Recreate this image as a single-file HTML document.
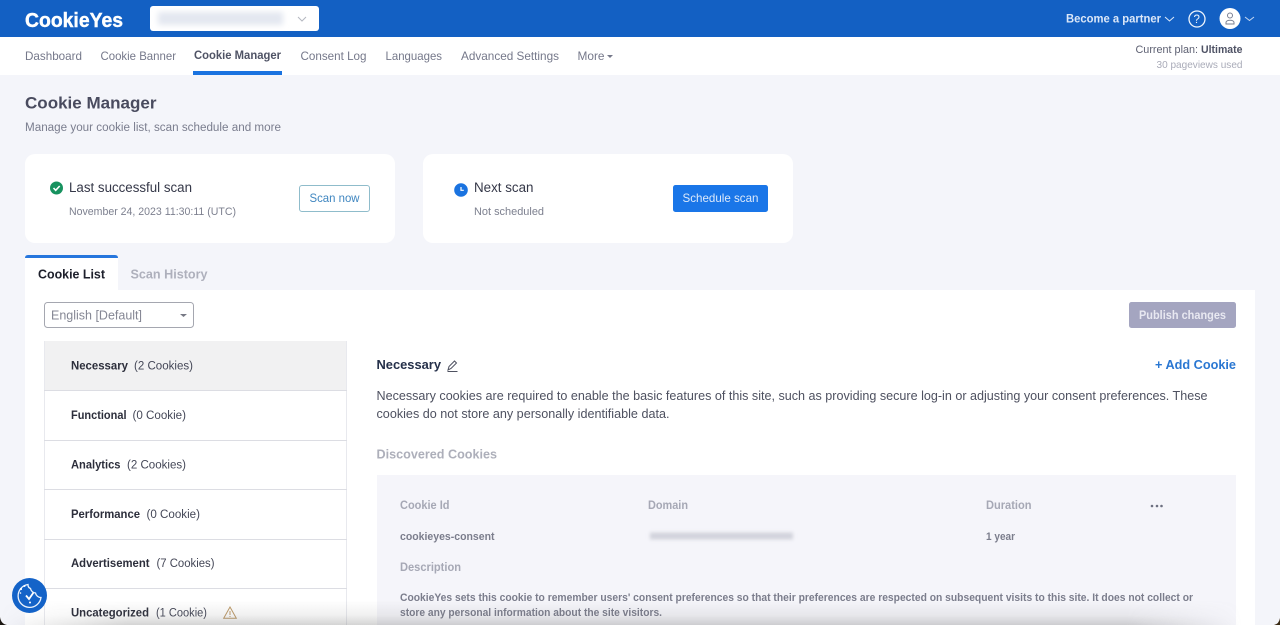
<!DOCTYPE html>
<html lang="en"><head><meta charset="utf-8"><title>Cookie Manager</title>
<style>
html,body{margin:0;padding:0;width:1280px;height:625px;overflow:hidden;background:#f4f5fa}
svg{display:block;overflow:hidden}
text{font-family:"Liberation Sans",sans-serif;font-size:12px;fill:#6b6e80}
.b{font-weight:700}
</style></head><body>
<svg width="1280" height="625" viewBox="0 0 1280 625" xmlns="http://www.w3.org/2000/svg">
<defs>
<filter id="bl3" x="-20%" y="-80%" width="140%" height="260%"><feGaussianBlur stdDeviation="3"/></filter>
<filter id="bl1" x="-20%" y="-80%" width="140%" height="260%"><feGaussianBlur stdDeviation="1.800"/></filter>
<filter id="soft" x="-5%" y="-20%" width="110%" height="140%"><feGaussianBlur stdDeviation=".35"/></filter>
<linearGradient id="vs" x1="0" y1="0" x2="0" y2="1"><stop offset="0" stop-color="#707070" stop-opacity="0"/><stop offset=".6" stop-color="#707070" stop-opacity=".1"/><stop offset="1" stop-color="#707070" stop-opacity=".3"/></linearGradient>
<linearGradient id="hs" x1="0" y1="0" x2="1" y2="0"><stop offset="0" stop-color="#000"/><stop offset=".1" stop-color="#fff"/><stop offset=".88" stop-color="#fff"/><stop offset=".97" stop-color="#000"/></linearGradient>
<mask id="hm" maskUnits="userSpaceOnUse" x="0" y="600" width="1280" height="25"><rect x="0" y="600" width="1280" height="25" fill="url(#hs)"/></mask>
</defs>
<rect width="1280" height="625" fill="#f4f5fa"/>
<!-- header -->
<rect width="1280" height="37" fill="#1360c3"/>
<text x="25" y="27" class="b" style="font-size:20px;fill:#fff;stroke:#fff;stroke-width:.4" textLength="98" lengthAdjust="spacingAndGlyphs">CookieYes</text>
<rect x="150" y="6" width="169" height="25" rx="3" fill="#fff"/>
<rect x="158" y="12" width="125" height="13" fill="#e3e7f0" filter="url(#bl3)"/>
<path d="M298 17l4 4 4-4" fill="none" stroke="#b4b7c0" stroke-width="1"/>
<text x="1066" y="22.500" class="b" style="font-size:12px;fill:#dbe7f8" textLength="95" lengthAdjust="spacingAndGlyphs">Become a partner</text>
<path d="M1165 17l4.500 4 4.500-4" fill="none" stroke="#dfeafa" stroke-width="1"/>
<circle cx="1197" cy="19" r="8" fill="none" stroke="#eef4fc" stroke-width="1.300"/>
<text x="1193.500" y="23" style="font-size:11.500px;fill:#eef4fc">?</text>
<circle cx="1230" cy="18.500" r="10.500" fill="#fff"/>
<circle cx="1230" cy="15.500" r="2.500" fill="none" stroke="#7a7f92"/>
<path d="M1226 24v-1.500c0-3 8-3 8 0v1.500z" fill="none" stroke="#7a7f92"/>
<path d="M1245 17l4.500 3.500 4.500-3.500" fill="none" stroke="#c5d7f2" stroke-width="1"/>
<!-- nav -->
<rect y="37" width="1280" height="38" fill="#fff"/>
<rect x="193" y="71" width="89" height="4" fill="#1a73e0"/>
<!-- cards -->
<rect x="25" y="154" width="370" height="89" rx="10" fill="#fff"/>
<rect x="423" y="154" width="370" height="89" rx="10" fill="#fff"/>
<g filter="url(#soft)">
<text x="25" y="60" style="fill:#75788a;font-size:12px" textLength="57" lengthAdjust="spacingAndGlyphs">Dashboard</text>
<text x="100.500" y="60" style="fill:#75788a;font-size:12px" textLength="75.500" lengthAdjust="spacingAndGlyphs">Cookie Banner</text>
<text x="194" y="59" class="b" style="fill:#505365;font-size:12px" textLength="87" lengthAdjust="spacingAndGlyphs">Cookie Manager</text>
<text x="300.500" y="60" style="fill:#75788a;font-size:12px" textLength="66" lengthAdjust="spacingAndGlyphs">Consent Log</text>
<text x="385.500" y="60" style="fill:#75788a;font-size:12px" textLength="56.500" lengthAdjust="spacingAndGlyphs">Languages</text>
<text x="461" y="60" style="fill:#75788a;font-size:12px" textLength="98" lengthAdjust="spacingAndGlyphs">Advanced Settings</text>
<text x="577.500" y="60" style="fill:#75788a;font-size:12px" textLength="27" lengthAdjust="spacingAndGlyphs">More</text>
<text x="1135.500" y="53" style="font-size:11px;fill:#5d6072" textLength="62.500" lengthAdjust="spacingAndGlyphs">Current plan:</text>
<text x="1201" y="53" class="b" style="font-size:11px;fill:#505365" textLength="41.500" lengthAdjust="spacingAndGlyphs">Ultimate</text>
<text x="1156.500" y="68" style="font-size:10.500px;fill:#a9abb8" textLength="86" lengthAdjust="spacingAndGlyphs">30 pageviews used</text>
<!-- heading -->
<text x="25" y="108.500" class="b" style="font-size:16.500px;fill:#4a4c5e" textLength="131.500" lengthAdjust="spacingAndGlyphs">Cookie Manager</text>
<text x="25" y="131" style="font-size:11.500px;fill:#7a7d8e" textLength="256" lengthAdjust="spacingAndGlyphs">Manage your cookie list, scan schedule and more</text>
<text x="69" y="192" style="font-size:13.500px;fill:#353848" textLength="123" lengthAdjust="spacingAndGlyphs">Last successful scan</text>
<text x="69" y="215" style="font-size:11px;fill:#7d808f" textLength="167" lengthAdjust="spacingAndGlyphs">November 24, 2023 11:30:11 (UTC)</text>
<text x="474" y="192" style="font-size:13.500px;fill:#353848" textLength="59.500" lengthAdjust="spacingAndGlyphs">Next scan</text>
<text x="474" y="215" style="font-size:11px;fill:#7d808f" textLength="70" lengthAdjust="spacingAndGlyphs">Not scheduled</text>
</g>
<path d="M607 55h6l-3 3z" fill="#75788a"/>
<circle cx="56.500" cy="188" r="6.500" fill="#17925f"/>
<path d="M53.500 188l2.200 2.300 4-4.300" fill="none" stroke="#fff" stroke-width="1.600"/>
<rect x="299.500" y="185.500" width="70" height="26" rx="2.500" fill="#fff" stroke="#8fbccb"/>
<text x="309.500" y="202" style="font-size:12px;fill:#3f86c0" textLength="50" lengthAdjust="spacingAndGlyphs">Scan now</text>
<circle cx="461" cy="190" r="6.800" fill="#1a73e0"/>
<path d="M461 187v3.300h2.800" fill="none" stroke="#fff" stroke-width="1.200"/>
<rect x="673" y="185" width="95" height="27" rx="2.500" fill="#1a76e8"/>
<text x="682.500" y="202" style="font-size:12px;fill:#dce9fb" textLength="76" lengthAdjust="spacingAndGlyphs">Schedule scan</text>
<!-- tabs -->
<rect x="25" y="290" width="1230" height="335" fill="#fff"/>
<path d="M25 290v-32q0-3 3-3h87q3 0 3 3v32z" fill="#fff"/>
<path d="M25 258q0-3 3-3h87q3 0 3 3z" fill="#2676dd"/>
<text x="38" y="278.500" class="b" style="font-size:13px;fill:#1d1f2b" textLength="67" lengthAdjust="spacingAndGlyphs">Cookie List</text>
<text x="130.500" y="278.500" class="b" style="font-size:13px;fill:#aeb0bc" textLength="77" lengthAdjust="spacingAndGlyphs">Scan History</text>
<!-- select -->
<rect x="44.500" y="302.500" width="149" height="25" rx="3" fill="#fff" stroke="#a5a7b0"/>
<text x="51" y="319.500" style="font-size:12.500px;fill:#858794" textLength="91" lengthAdjust="spacingAndGlyphs">English [Default]</text>
<path d="M180 314h7l-3.500 3z" fill="#777985"/>
<rect x="1129" y="302" width="107" height="26" rx="2.500" fill="#a4a5c0"/>
<text x="1139" y="319" class="b" style="font-size:12px;fill:#e8e8f1" textLength="87" lengthAdjust="spacingAndGlyphs">Publish changes</text>
<!-- left list -->
<rect x="44" y="341" width="303" height="49.500" fill="#f1f1f2"/>
<path d="M44.500 341v284M346.500 341v284" stroke="#e8e9ee" fill="none"/>
<path d="M44 390.500h303M44 440.500h303M44 489.500h303M44 539.500h303M44 588.500h303" stroke="#dcdde3" fill="none"/>
<text x="71" y="369.500" class="b" style="font-size:11.500px;fill:#2c2e3b" textLength="57" lengthAdjust="spacingAndGlyphs">Necessary</text>
<text x="134" y="369.500" style="font-size:11.500px;fill:#444757" textLength="59" lengthAdjust="spacingAndGlyphs">(2 Cookies)</text>
<text x="71" y="419" class="b" style="font-size:11.500px;fill:#2c2e3b" textLength="55.500" lengthAdjust="spacingAndGlyphs">Functional</text>
<text x="132.500" y="419" style="font-size:11.500px;fill:#444757" textLength="53.500" lengthAdjust="spacingAndGlyphs">(0 Cookie)</text>
<text x="71" y="468.500" class="b" style="font-size:11.500px;fill:#2c2e3b" textLength="49.500" lengthAdjust="spacingAndGlyphs">Analytics</text>
<text x="127" y="468.500" style="font-size:11.500px;fill:#444757" textLength="59" lengthAdjust="spacingAndGlyphs">(2 Cookies)</text>
<text x="71" y="518" class="b" style="font-size:11.500px;fill:#2c2e3b" textLength="69" lengthAdjust="spacingAndGlyphs">Performance</text>
<text x="146.500" y="518" style="font-size:11.500px;fill:#444757" textLength="53.500" lengthAdjust="spacingAndGlyphs">(0 Cookie)</text>
<text x="71" y="567" class="b" style="font-size:11.500px;fill:#2c2e3b" textLength="78.500" lengthAdjust="spacingAndGlyphs">Advertisement</text>
<text x="156.500" y="567" style="font-size:11.500px;fill:#444757" textLength="58" lengthAdjust="spacingAndGlyphs">(7 Cookies)</text>
<text x="71" y="616.500" class="b" style="font-size:11.500px;fill:#2c2e3b" textLength="78" lengthAdjust="spacingAndGlyphs">Uncategorized</text>
<text x="156" y="616.500" style="font-size:11.500px;fill:#444757" textLength="51" lengthAdjust="spacingAndGlyphs">(1 Cookie)</text>
<path d="M230 607l6.300 11.300h-12.600z" fill="none" stroke="#bd9a68" stroke-width="1"/>
<path d="M230 611v4M230 616v1" stroke="#bd9a68" stroke-width="1"/>
<!-- right -->
<text x="376.500" y="369" class="b" style="font-size:13px;fill:#25304a" textLength="64.500" lengthAdjust="spacingAndGlyphs">Necessary</text>
<path d="M448 370l1-3.500 5.500-5.500 2 2-5.500 5.500zM447.500 371.500h10" fill="none" stroke="#4e5160" stroke-width="1"/>
<text x="1155" y="369" class="b" style="font-size:13px;fill:#2a77d2" textLength="81" lengthAdjust="spacingAndGlyphs">+ Add Cookie</text>
<text x="376.500" y="400" style="font-size:12.500px;fill:#4e5160" textLength="831" lengthAdjust="spacingAndGlyphs">Necessary cookies are required to enable the basic features of this site, such as providing secure log-in or adjusting your consent preferences. These</text>
<text x="376.500" y="418" style="font-size:12.500px;fill:#4e5160" textLength="293" lengthAdjust="spacingAndGlyphs">cookies do not store any personally identifiable data.</text>
<text x="376.500" y="458.500" class="b" style="font-size:12.500px;fill:#adafba" textLength="120.500" lengthAdjust="spacingAndGlyphs">Discovered Cookies</text>
<!-- table -->
<rect x="377" y="475" width="859" height="150" fill="#f5f5fa"/>
<text x="400" y="509" class="b" style="font-size:11.500px;fill:#a6a8b5" textLength="49.500" lengthAdjust="spacingAndGlyphs">Cookie Id</text>
<text x="648" y="509" class="b" style="font-size:11.500px;fill:#a6a8b5" textLength="40" lengthAdjust="spacingAndGlyphs">Domain</text>
<text x="986" y="509" class="b" style="font-size:11.500px;fill:#a6a8b5" textLength="45.500" lengthAdjust="spacingAndGlyphs">Duration</text>
<circle cx="1152" cy="506" r="1.300" fill="#6d7080"/><circle cx="1157" cy="506" r="1.300" fill="#6d7080"/><circle cx="1161.500" cy="506" r="1.300" fill="#6d7080"/>
<text x="400" y="540" class="b" style="font-size:11px;fill:#7b7d8c" textLength="94.500" lengthAdjust="spacingAndGlyphs">cookieyes-consent</text>
<rect x="650" y="532.500" width="143" height="7" fill="#d2d3dc" filter="url(#bl1)"/>
<text x="986" y="540" class="b" style="font-size:11px;fill:#7b7d8c" textLength="29" lengthAdjust="spacingAndGlyphs">1 year</text>
<text x="400" y="571" class="b" style="font-size:11.500px;fill:#a6a8b5" textLength="61" lengthAdjust="spacingAndGlyphs">Description</text>
<text x="400" y="601" class="b" style="font-size:11px;fill:#7b7d8c" textLength="793" lengthAdjust="spacingAndGlyphs">CookieYes sets this cookie to remember users' consent preferences so that their preferences are respected on subsequent visits to this site. It does not collect or</text>
<text x="400" y="616" class="b" style="font-size:11px;fill:#7b7d8c" textLength="262" lengthAdjust="spacingAndGlyphs">store any personal information about the site visitors.</text>
<!-- bottom shade -->
<rect x="0" y="600" width="1280" height="25" fill="url(#vs)" mask="url(#hm)"/>
<!-- corners -->
<path d="M0 617q1 7 7 8H0z" fill="#1c1712"/>
<path d="M1280 618q-1 6-6 7h6z" fill="#3a2a14"/>
<!-- floating widget -->
<circle cx="29.500" cy="595.500" r="17.500" fill="#1463c8"/>
<path d="M28 584.500a11.500 11.500 0 1 0 13 13a5.500 5.500 0 0 1-5.500-4.500a5.500 5.500 0 0 1-5-4.500a4 4 0 0 1-2.500-4z" fill="none" stroke="#eaf2fc" stroke-width="1.300"/>
<path d="M26 595.500l3 3.500 4.500-6.500" fill="none" stroke="#fff" stroke-width="1.800"/>
<circle cx="30" cy="602.500" r="1" fill="#fff"/>
<circle cx="21" cy="589" r="1.100" fill="#fff"/><circle cx="24.500" cy="586" r="1" fill="#fff"/><circle cx="20.500" cy="593" r=".8" fill="#fff"/>
</svg>
</body></html>
